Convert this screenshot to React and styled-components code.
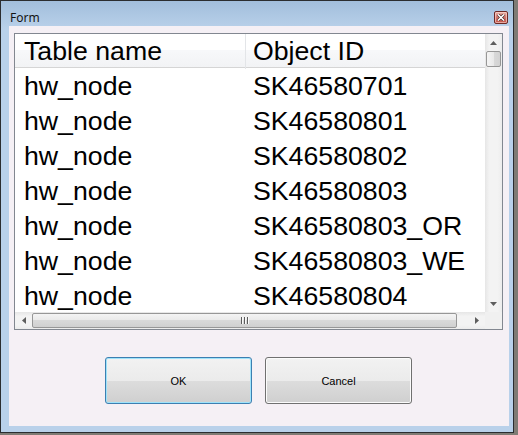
import styled, { createGlobalStyle } from 'styled-components'

const GlobalStyle = createGlobalStyle`
  html, body {
    margin: 0;
    padding: 0;
    background: #7f7b74;
  }
  body {
    width: 518px;
    height: 435px;
    overflow: hidden;
  }
`;

const Window = styled.div`
  box-sizing: border-box;
  width: 514px;
  height: 433px;
  border: 1px solid #2b2d30;
  background: linear-gradient(#a2bedc, #b9d1ea 28px);
  display: flex;
  flex-direction: column;
`;

const TitleBar = styled.div`
  height: 25px;
  display: flex;
  align-items: flex-start;
  justify-content: space-between;
  padding: 0 5px 0 9px;
`;

const Title = styled.div`
  margin-top: 9px;
  font-family: "Noto Sans", "DejaVu Sans", sans-serif;
  font-size: 12px;
  line-height: 16px;
  color: #141414;
`;

const CloseButton = styled.div`
  box-sizing: border-box;
  margin-top: 10px;
  width: 14px;
  height: 13px;
  border: 1px solid #6e2a25;
  border-radius: 2px;
  background: linear-gradient(#eab3a8, #d2746a 50%, #c2564b);
  box-shadow: inset 0 0 0 1px rgba(255, 220, 215, 0.6);
  display: flex;
  align-items: center;
  justify-content: center;
`;

const Frame = styled.div`
  flex: 1;
  display: flex;
  padding: 0 4px 6px 8px;
`;

const Client = styled.div`
  flex: 1;
  background: #f5f0f5;
  padding: 7px 6px 0 5px;
  display: flex;
  flex-direction: column;
`;

const ListView = styled.div`
  box-sizing: border-box;
  width: 489px;
  height: 297px;
  border: 1px solid #828790;
  background: #fff;
  display: grid;
  grid-template-columns: 1fr 17px;
  grid-template-rows: 1fr 17px;
`;

const Content = styled.div`
  overflow: hidden;
  font-family: "Liberation Sans", Arial, sans-serif;
  font-size: 26.7px;
  color: #000;
`;

const Row = styled.div`
  display: grid;
  grid-template-columns: 231px 1fr;
  box-sizing: border-box;
  height: ${p => (p.$header ? '34px' : '35px')};
  line-height: ${p => (p.$header ? '35px' : '37px')};
  white-space: nowrap;
  ${p => p.$header && `
    background: linear-gradient(#ffffff 50%, #f7f8fa 50%, #f2f3f5);
    border-bottom: 1px solid #d5d5d5;
  `}
`;

const Cell = styled.div`
  padding-left: ${p => (p.$first ? '9px' : '7px')};
  ${p => p.$header && p.$first && 'border-right: 1px solid #e3e5e8;'}
`;

const VScroll = styled.div`
  display: flex;
  flex-direction: column;
  background: linear-gradient(90deg, #e6e6e6, #f3f3f3 25%, #f3f3f3 75%, #ececec);
`;

const HScroll = styled.div`
  display: flex;
  background: linear-gradient(#e6e6e6, #f3f3f3 25%, #f3f3f3 75%, #ececec);
`;

const Corner = styled.div`
  background: #f0f0f0;
`;

const ArrowBox = styled.div`
  width: 17px;
  height: 17px;
  flex: none;
  display: flex;
  align-items: center;
  justify-content: center;
`;

const Track = styled.div`
  flex: 1;
  display: flex;
  flex-direction: ${p => (p.$vertical ? 'column' : 'row')};
`;

const Thumb = styled.div`
  box-sizing: border-box;
  border: 1px solid #979797;
  border-radius: 2px;
  display: flex;
  align-items: center;
  justify-content: center;
  ${p => p.$vertical ? `
    height: 16px;
    margin: 0 1px;
    background: linear-gradient(90deg, #f4f4f4, #e9e9e9 50%, #d9d9d9 50%, #d2d2d2);
  ` : `
    width: 425px;
    margin: 1px 0;
    background: linear-gradient(#f4f4f4, #e9e9e9 50%, #d9d9d9 50%, #d0d0d0);
  `}
`;

const Grip = styled.div`
  display: flex;
  gap: 1px;
`;

const GripLine = styled.div`
  width: 1px;
  height: 7px;
  background: #5c5c5c;
  box-shadow: 1px 0 0 #fafafa;
  margin-right: 1px;
`;

const ButtonRow = styled.div`
  display: flex;
  justify-content: center;
  gap: 13px;
  margin-top: 27px;
`;

const Button = styled.button`
  box-sizing: border-box;
  width: 147px;
  height: 47px;
  padding: 0;
  border: 1px solid ${p => (p.$focused ? '#3c7fb1' : '#707070')};
  border-radius: 3px;
  background: linear-gradient(#f2f2f2, #ebebeb 50%, #dddddd 50%, #cfcfcf);
  box-shadow: inset 0 0 0 1px ${p => (p.$focused ? '#9fe3fa' : '#fbfbfb')};
  font-family: "Liberation Sans", Arial, sans-serif;
  font-size: 11px;
  color: #000;
`;

function Arrow({ dir }) {
  const pts = {
    up: '0,4 7,4 3.5,0',
    down: '0,0 7,0 3.5,4',
    left: '4,0 4,7 0,3.5',
    right: '0,0 0,7 4,3.5',
  }[dir];
  const vertical = dir === 'up' || dir === 'down';
  return (
    <svg width={vertical ? 7 : 4} height={vertical ? 4 : 7} viewBox={vertical ? '0 0 7 4' : '0 0 4 7'}>
      <polygon points={pts} fill="#5e5e5e" />
    </svg>
  );
}

const rows = [
  ['hw_node', 'SK46580701'],
  ['hw_node', 'SK46580801'],
  ['hw_node', 'SK46580802'],
  ['hw_node', 'SK46580803'],
  ['hw_node', 'SK46580803_OR'],
  ['hw_node', 'SK46580803_WE'],
  ['hw_node', 'SK46580804'],
];

export default function App() {
  return (
    <>
      <GlobalStyle />
      <Window>
        <TitleBar>
          <Title>Form</Title>
          <CloseButton>
            <svg width="8" height="7" viewBox="0 0 8 7">
              <path d="M1 0.5 L7 6.5 M7 0.5 L1 6.5" stroke="#4a2a28" strokeWidth="3" />
              <path d="M1 0.5 L7 6.5 M7 0.5 L1 6.5" stroke="#fff" strokeWidth="1.6" />
            </svg>
          </CloseButton>
        </TitleBar>
        <Frame>
          <Client>
            <ListView>
              <Content>
                <Row $header>
                  <Cell $header $first>Table name</Cell>
                  <Cell $header>Object ID</Cell>
                </Row>
                {rows.map((r, i) => (
                  <Row key={i}>
                    <Cell $first>{r[0]}</Cell>
                    <Cell>{r[1]}</Cell>
                  </Row>
                ))}
              </Content>
              <VScroll>
                <ArrowBox><Arrow dir="up" /></ArrowBox>
                <Track $vertical>
                  <Thumb $vertical />
                </Track>
                <ArrowBox><Arrow dir="down" /></ArrowBox>
              </VScroll>
              <HScroll>
                <ArrowBox><Arrow dir="left" /></ArrowBox>
                <Track>
                  <Thumb>
                    <Grip>
                      <GripLine />
                      <GripLine />
                      <GripLine />
                    </Grip>
                  </Thumb>
                </Track>
                <ArrowBox><Arrow dir="right" /></ArrowBox>
              </HScroll>
              <Corner />
            </ListView>
            <ButtonRow>
              <Button $focused>OK</Button>
              <Button>Cancel</Button>
            </ButtonRow>
          </Client>
        </Frame>
      </Window>
    </>
  );
}
